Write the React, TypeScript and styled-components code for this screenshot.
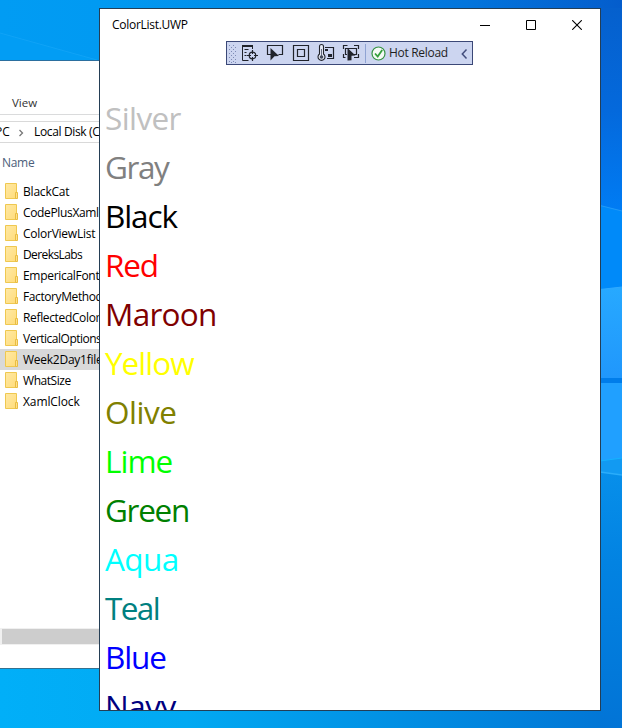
import React from "react";
import styled, { createGlobalStyle } from "styled-components";

const GlobalStyle = createGlobalStyle`
  * { box-sizing: border-box; }
  body { margin: 0; overflow: hidden; }
`;

const Desktop = styled.main`
  position: relative;
  width: 622px;
  height: 728px;
  overflow: hidden;
  font-family: "Open Sans", "Noto Sans", sans-serif;
  font-size: 12px;
  color: #000;
`;

const Wallpaper = styled.svg`
  display: block;
`;

const ExplorerWindow = styled.section`
  position: absolute;
  left: 0;
  top: 60px;
  width: 110px;
  height: 609px;
  display: flex;
  flex-direction: column;
  background: #fff;
  border-top: 1px solid #2b6f9f;
  border-bottom: 1px solid #35718f;
  overflow: hidden;
  white-space: nowrap;
`;

const RibbonTab = styled.div`
  height: 54px;
  padding: 32px 0 0 12px;
  line-height: 20px;
  font-size: 11.5px;
  color: #333;
  border-bottom: 1px solid #dadbdc;
`;

const AddressBar = styled.div`
  height: 22px;
  margin-top: 6px;
  display: flex;
  align-items: center;
  border: 1px solid #d9d9d9;
  border-left: 0;
  border-right: 0;
`;

const Crumb = styled.span<{ $width: number; $shift?: number; $spacing?: number }>`
  width: ${(p) => p.$width}px;
  margin-left: ${(p) => p.$shift ?? 0}px;
  letter-spacing: ${(p) => p.$spacing ?? 0}px;
  line-height: 18px;
  flex: none;
`;

const CrumbArrow = styled.svg`
  flex: none;
  margin: 1px 10px 0 10px;
`;

const ColumnHeader = styled.div`
  height: 38px;
  padding: 10px 0 0 2px;
  line-height: 20px;
  color: #4c607a;
  letter-spacing: -0.3px;
`;

const FileRow = styled.div<{ $selected?: boolean; $spacing: number }>`
  height: 21px;
  display: flex;
  align-items: center;
  padding-left: 5px;
  gap: 5px;
  flex: none;
  letter-spacing: ${(p) => p.$spacing}px;
  background: ${(p) => (p.$selected ? "#d9d9d9" : "transparent")};
`;

const FolderSvg = styled.svg`
  flex: none;
  margin-top: -1px;
`;

const ScrollTrack = styled.div`
  margin-top: auto;
  margin-bottom: 23px;
  height: 17px;
  padding: 1px 0 1px 2px;
  background: #f0f0f0;
`;

const ScrollThumb = styled.div`
  height: 15px;
  background: #cdcdcd;
`;

const AppWindow = styled.section`
  position: absolute;
  left: 99px;
  top: 8px;
  width: 502px;
  height: 703px;
  display: flex;
  flex-direction: column;
  background: #fff;
  border: 1px solid #243e55;
  overflow: hidden;
`;

const TitleBar = styled.header`
  height: 32px;
  flex: none;
  display: flex;
  align-items: center;
  padding-left: 12px;
`;

const Title = styled.span`
  flex: 1;
  padding-bottom: 2px;
  letter-spacing: -0.28px;
`;

const CaptionButton = styled.button`
  width: 46px;
  height: 32px;
  padding: 0;
  border: 0;
  background: transparent;
  display: flex;
  align-items: center;
  justify-content: center;
`;

const DebugToolbar = styled.nav`
  flex: none;
  width: 247px;
  height: 24px;
  margin-left: 126px;
  display: flex;
  background: #ccd5f0;
  border: 1px solid #3b4877;
`;

const ToolIcons = styled.svg`
  flex: none;
`;

const HotReload = styled.span`
  width: 71px;
  line-height: 22px;
  letter-spacing: -0.3px;
  color: #1e1e1e;
  white-space: nowrap;
`;

const ColorList = styled.ul`
  margin: 0;
  padding: 28px 0 0 5px;
  list-style: none;
`;

const ColorItem = styled.li<{ $color: string; $spacing: number }>`
  height: 49px;
  line-height: 49px;
  font-size: 31.5px;
  color: ${(p) => p.$color};
  letter-spacing: ${(p) => p.$spacing}px;
`;

const files = [
  { name: "BlackCat", spacing: -0.2 },
  { name: "CodePlusXaml", spacing: -0.35 },
  { name: "ColorViewList", spacing: -0.25 },
  { name: "DereksLabs", spacing: -0.6 },
  { name: "EmpericalFont", spacing: -0.3 },
  { name: "FactoryMethod", spacing: -0.4 },
  { name: "ReflectedColors", spacing: -0.35 },
  { name: "VerticalOptions", spacing: -0.5 },
  { name: "Week2Day1files", spacing: -0.25, selected: true },
  { name: "WhatSize", spacing: -0.45 },
  { name: "XamlClock", spacing: -0.1 },
];

const colors = [
  { name: "Silver", value: "#c0c0c0", spacing: -0.6 },
  { name: "Gray", value: "#808080", spacing: -1.4 },
  { name: "Black", value: "#000000", spacing: -1.1 },
  { name: "Red", value: "#ff0000", spacing: -1.2 },
  { name: "Maroon", value: "#800000", spacing: -0.7 },
  { name: "Yellow", value: "#ffff00", spacing: -1.0 },
  { name: "Olive", value: "#808000", spacing: -0.5 },
  { name: "Lime", value: "#00ff00", spacing: -1.0 },
  { name: "Green", value: "#008000", spacing: -1.3 },
  { name: "Aqua", value: "#00ffff", spacing: -0.6 },
  { name: "Teal", value: "#008080", spacing: -1.6 },
  { name: "Blue", value: "#0000ff", spacing: -1.1 },
  { name: "Navy", value: "#000080", spacing: -0.5 },
];

const Folder = () => (
  <FolderSvg width="13" height="16" viewBox="0 0 13 16">
    <defs>
      <linearGradient id="folder" x1="0" y1="0" x2="1" y2="1">
        <stop offset="0" stopColor="#ffe9a5" />
        <stop offset="1" stopColor="#ffdc7a" />
      </linearGradient>
    </defs>
    <path d="M.5.5h11v15H.5z" fill="url(#folder)" stroke="#efc850" />
    <path d="M10.5 9.5h2v6h-2z" fill="#ffe08a" stroke="#e9bd43" />
  </FolderSvg>
);

const Background = () => (
  <Wallpaper width="622" height="728" viewBox="0 0 622 728">
    <defs>
      <linearGradient id="top" x1="0" x2="1">
        <stop offset="0" stopColor="#019cf3" />
        <stop offset=".16" stopColor="#019af2" />
        <stop offset=".4" stopColor="#028de9" />
        <stop offset=".75" stopColor="#0375dc" />
        <stop offset="1" stopColor="#045dcc" />
      </linearGradient>
      <linearGradient id="bottom" x1="0" x2="1">
        <stop offset="0" stopColor="#01aff8" />
        <stop offset=".3" stopColor="#02a9f2" />
        <stop offset="1" stopColor="#0274d4" />
      </linearGradient>
      <linearGradient id="side" x1="0" y1="0" x2="0" y2="1">
        <stop offset="0" stopColor="#0560cd" />
        <stop offset=".5" stopColor="#0469dc" />
        <stop offset="1" stopColor="#007cf4" />
      </linearGradient>
      <linearGradient id="low" x1="0" y1="0" x2="0" y2="1">
        <stop offset="0" stopColor="#078fea" />
        <stop offset=".35" stopColor="#0283e2" />
        <stop offset="1" stopColor="#0274d6" />
      </linearGradient>
      <linearGradient id="pane" x1="0" y1="0" x2="0" y2="1">
        <stop offset="0" stopColor="#27a9ff" />
        <stop offset="1" stopColor="#2097fc" />
      </linearGradient>
    </defs>
    <path d="M0 0h622v400H0z" fill="url(#top)" />
    <path d="M0 33L97 60v2H0z" fill="#029df4" />
    <path d="M0 33L97 60" stroke="#10a3f6" fill="none" />
    <path d="M0 400h622v328H0z" fill="url(#bottom)" />
    <path d="M600 8h22v204h-22z" fill="url(#side)" />
    <path d="M600 205l22 6v80h-22z" fill="#008af9" />
    <path d="M600 205.500l22 5.500" stroke="#219af8" />
    <path d="M600 289.500l22-2.500v91h-22z" fill="url(#pane)" />
    <path d="M600 289.500l22-2.500" stroke="#30aaff" />
    <path d="M600 378h22v5h-22z" fill="#007dea" />
    <path d="M600 383h22v78h-22z" fill="#20a0ff" />
    <path d="M600 461l22-3v17l-22-3z" fill="#129af2" />
    <path d="M600 461l22-3" stroke="#16b2ff" />
    <path d="M600 472l22 3v253h-22z" fill="url(#low)" />
    <path d="M600 472l22 3" stroke="#2badfa" strokeWidth="1.500" />
  </Wallpaper>
);

const DebugIcons = () => (
  <ToolIcons width="162" height="22" viewBox="227 42 162 22" fill="none" stroke="#20232b">
    <g fill="#7e8bb5" stroke="none">
      {[0, 1, 2, 3, 4].map((r) => (
        <React.Fragment key={r}>
          <path d={`M229 ${45 + r * 4}h1v1h-1zM233 ${45 + r * 4}h1v1h-1z`} />
          <path d={`M231 ${47 + r * 4 - (r === 4 ? 1 : 0)}h1v1h-1zM235 ${47 + r * 4 - (r === 4 ? 1 : 0)}h1v1h-1z`} />
        </React.Fragment>
      ))}
    </g>
    <path d="M242 46.500h11M242 45.500h11M242.500 46v14.500h6M244.500 49.500h4M244.500 52.500h2M244.500 55.500h2M252.500 47v2" />
    <circle cx="252.500" cy="55.500" r="3.300" strokeWidth="1.200" />
    <path d="M252.500 50v4M252.500 57v4M247 55.500h4M254 55.500h4" strokeWidth="1.200" />
    <path d="M271 54.500h-3.500v-9h15v9h-4" strokeWidth="1.200" />
    <path d="M270.500 48l8.500 8-4.500.300-4 4.200z" fill="#20232b" stroke="none" />
    <path d="M293.500 45.500h15v15h-15zM297.500 49.500h7v7h-7z" strokeWidth="1.200" />
    <path d="M319.500 54v-7.500a2 2 0 0 1 4 0V54a3.500 3.500 0 1 1-4 0z" fill="#e8ecf7" strokeWidth="1.100" />
    <path d="M321.500 49v7" stroke="#666d81" />
    <circle cx="321.500" cy="57" r="1.800" fill="#454b5c" stroke="none" />
    <path d="M325 47.500h8.500v11H327" strokeWidth="1.200" />
    <path d="M325 49h3v2h-3zM328 54h4v3h-4z" fill="#20232b" stroke="none" />
    <path d="M343.500 49v-3.500h4M354 45.500h4.500V49M358.500 54v3.500H354M343.500 54v3.500h2M347 54.500h-1.500v-6h11v6H354" strokeWidth="1.200" />
    <path d="M347.500 48l8 7.500-4 .3v4.500l-4 .2z" fill="#20232b" stroke="none" />
    <path d="M365.500 44v19" stroke="#8fa3d3" />
    <circle cx="378.500" cy="53.500" r="6.500" fill="#f5faf6" stroke="#369344" strokeWidth="1.200" />
    <path d="M375 53.500l2.700 3 4.500-6.500" stroke="#35a03d" strokeWidth="1.800" />
  </ToolIcons>
);

export default function App() {
  return (
    <>
      <GlobalStyle />
      <Desktop>
        <Background />
        <ExplorerWindow>
          <RibbonTab>View</RibbonTab>
          <AddressBar>
            <Crumb $width={13} $shift={-5}>PC</Crumb>
            <CrumbArrow width="6" height="8" viewBox="0 0 6 8" fill="none" stroke="#777" strokeWidth="1.300">
              <path d="M1.500 1l3 3-3 3" />
            </CrumbArrow>
            <Crumb $width={90} $spacing={-0.35}>Local Disk (C:)</Crumb>
          </AddressBar>
          <ColumnHeader>Name</ColumnHeader>
          {files.map((f) => (
            <FileRow key={f.name} $selected={f.selected} $spacing={f.spacing}>
              <Folder />
              {f.name}
            </FileRow>
          ))}
          <ScrollTrack>
            <ScrollThumb />
          </ScrollTrack>
        </ExplorerWindow>
        <AppWindow>
          <TitleBar>
            <Title>ColorList.UWP</Title>
            <CaptionButton aria-label="Minimize">
              <svg width="10" height="10" stroke="#000"><path d="M0 5.500h10" /></svg>
            </CaptionButton>
            <CaptionButton aria-label="Maximize">
              <svg width="10" height="10" stroke="#000" fill="none"><path d="M.5.5h9v9h-9z" /></svg>
            </CaptionButton>
            <CaptionButton aria-label="Close">
              <svg width="10" height="10" stroke="#000" strokeWidth="1.100"><path d="M.2.2l9.600 9.600M9.800.2L.2 9.800" /></svg>
            </CaptionButton>
          </TitleBar>
          <DebugToolbar>
            <DebugIcons />
            <HotReload>Hot Reload</HotReload>
            <ToolIcons width="12" height="22" viewBox="0 0 12 22" fill="none" stroke="#424d7c" strokeWidth="1.500">
              <path d="M6.500 7.500L2.300 12 6.500 16.500" />
            </ToolIcons>
          </DebugToolbar>
          <ColorList>
            {colors.map((c) => (
              <ColorItem key={c.name} $color={c.value} $spacing={c.spacing}>
                {c.name}
              </ColorItem>
            ))}
          </ColorList>
        </AppWindow>
      </Desktop>
    </>
  );
}
